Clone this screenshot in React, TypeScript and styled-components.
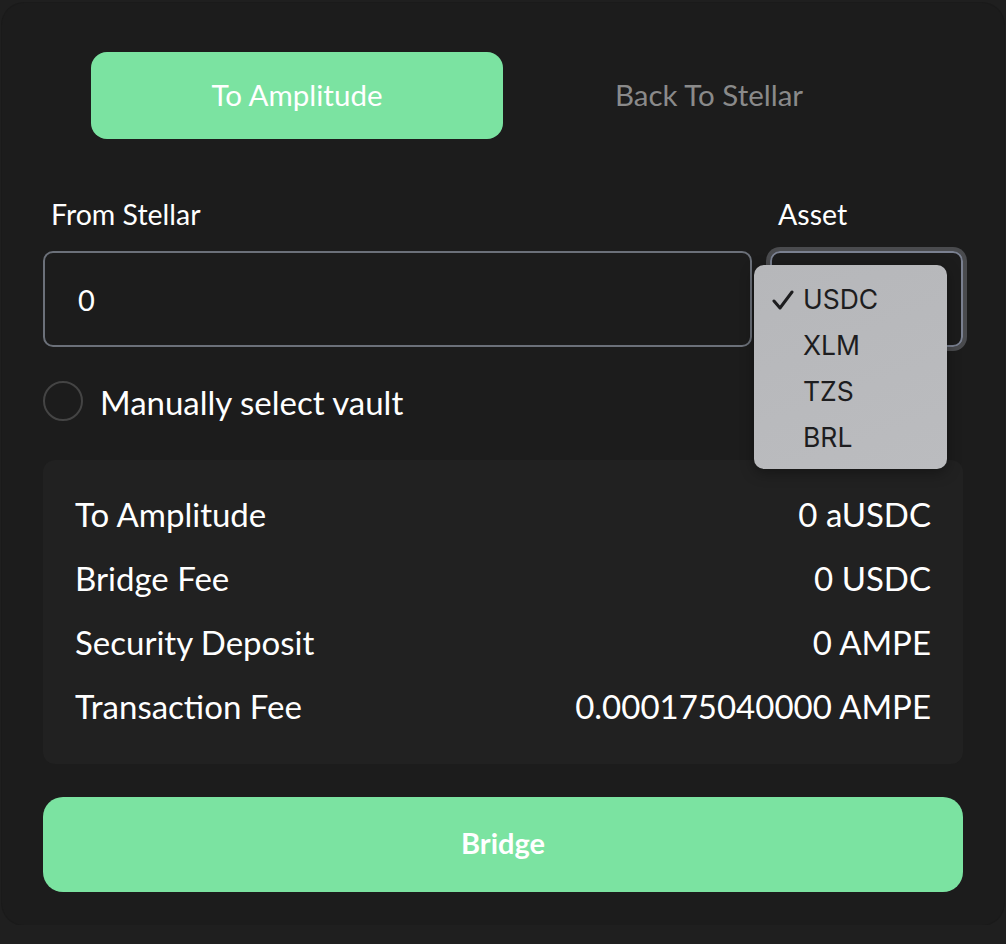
import React, { useState } from 'react';
import styled, { createGlobalStyle } from 'styled-components';

const GlobalStyle = createGlobalStyle`
    html, body {
        margin: 0;
        padding: 0;
        background: #1f1f1f;
    }
    * {
        box-sizing: border-box;
    }
`;

const green = '#7be3a1';
const font = `Lato, 'Open Sans', sans-serif`;

interface FeeRow {
    label: string;
    value: string;
}

const rows: FeeRow[] = [
    { label: 'To Amplitude', value: '0 aUSDC' },
    { label: 'Bridge Fee', value: '0 USDC' },
    { label: 'Security Deposit', value: '0 AMPE' },
    { label: 'Transaction Fee', value: '0.000175040000 AMPE' },
];

const assets = ['USDC', 'XLM', 'TZS', 'BRL'];

export default function App() {
    const [tab, setTab] = useState(0);
    const [asset, setAsset] = useState('USDC');

    return (
        <>
            <GlobalStyle />
            <Card>
                <Tabs>
                    <Tab active={tab === 0} onClick={() => setTab(0)}>
                        To Amplitude
                    </Tab>
                    <Tab active={tab === 1} onClick={() => setTab(1)}>
                        Back To Stellar
                    </Tab>
                </Tabs>

                <Fields>
                    <Label>From Stellar</Label>
                    <Label>Asset</Label>
                    <AmountInput defaultValue="0" />
                    <SelectWrap>
                        <SelectBox />
                        <Menu>
                            {assets.map((a) => (
                                <MenuItem key={a} onClick={() => setAsset(a)}>
                                    {a === asset && (
                                        <Check width="22" height="20" viewBox="0 0 22 20">
                                            <polyline points="2,11 8,18 20,2" />
                                        </Check>
                                    )}
                                    {a}
                                </MenuItem>
                            ))}
                        </Menu>
                    </SelectWrap>
                </Fields>

                <ToggleRow>
                    <Circle />
                    <ToggleLabel>Manually select vault</ToggleLabel>
                </ToggleRow>

                <InfoBox>
                    {rows.map((r) => (
                        <InfoRow key={r.label}>
                            <span>{r.label}</span>
                            <span>{r.value}</span>
                        </InfoRow>
                    ))}
                </InfoBox>

                <BridgeButton>Bridge</BridgeButton>
            </Card>
        </>
    );
}

const Card = styled.div`
    margin: 3px 2px 0 2px;
    width: 1002px;
    height: 922px;
    background: #1c1c1c;
    border-radius: 22px;
    box-shadow: 0 0 0 1px #1a1a1a;
    padding: 49px 41px 34px 41px;
    font-family: ${font};
    color: #ffffff;
    display: flex;
    flex-direction: column;
`;

const Tabs = styled.div`
    display: grid;
    grid-template-columns: 1fr 1fr;
    padding: 0 48px;
`;

const Tab = styled.button<{ active: boolean }>`
    height: 87px;
    border: none;
    border-radius: 16px;
    background: ${(p) => (p.active ? green : 'transparent')};
    color: ${(p) => (p.active ? '#ffffff' : '#8a8a8a')};
    font-family: ${font};
    font-size: 29.5px;
    padding: 0 0 2px 0;
    cursor: pointer;
`;

const Fields = styled.div`
    margin-top: 60px;
    display: grid;
    grid-template-columns: 709px 1fr;
    column-gap: 18px;
    row-gap: 22px;
    align-items: center;
`;

const Label = styled.div`
    padding-left: 8px;
    font-size: 28.5px;
    line-height: 30px;
`;

const AmountInput = styled.input`
    height: 96px;
    width: 100%;
    background: transparent;
    border: 2px solid #6b7079;
    border-radius: 10px;
    padding: 0 33px;
    color: #ffffff;
    font-family: ${font};
    font-size: 29px;
    outline: none;
`;

const SelectWrap = styled.div`
    position: relative;
    height: 96px;
`;

const SelectBox = styled.div`
    height: 96px;
    border: 2px solid #7a8090;
    border-radius: 10px;
    box-shadow: 0 0 0 4px #4a4b4e;
`;

const Menu = styled.div`
    position: absolute;
    left: -16px;
    top: 14px;
    width: 193px;
    padding: 11px 0 9px 0;
    border-radius: 10px;
    background: linear-gradient(160deg, #b6b7ba, #bbbcbf);
    box-shadow: 0 4px 14px rgba(0, 0, 0, 0.35);
    font-family: Inter, 'Liberation Sans', sans-serif;
    color: #1d1d1f;
`;

const MenuItem = styled.div`
    position: relative;
    height: 46px;
    line-height: 46px;
    padding-left: 49px;
    font-size: 26.5px;
    cursor: default;
`;

const Check = styled.svg`
    position: absolute;
    left: 18px;
    top: 14px;
    fill: none;
    stroke: #1d1d1f;
    stroke-width: 3;
    stroke-linecap: round;
    stroke-linejoin: round;
`;

const ToggleRow = styled.div`
    margin-top: 34px;
    height: 40px;
    display: flex;
    align-items: center;
    gap: 17px;
`;

const Circle = styled.div`
    width: 40px;
    height: 40px;
    flex: none;
    border-radius: 50%;
    border: 2px solid #444444;
`;

const ToggleLabel = styled.span`
    font-size: 33px;
    padding-top: 2px;
`;

const InfoBox = styled.div`
    margin-top: 39px;
    background: #212121;
    border-radius: 12px;
    padding: 22px 32px 26px 32px;
`;

const InfoRow = styled.div`
    display: flex;
    justify-content: space-between;
    align-items: center;
    height: 64px;
    font-size: 33px;
`;

const BridgeButton = styled.button`
    flex: none;
    margin-top: 33px;
    height: 95px;
    border: none;
    border-radius: 20px;
    background: ${green};
    color: #ffffff;
    font-family: ${font};
    font-size: 29px;
    font-weight: 700;
    padding: 0 0 5px 0;
    cursor: pointer;
`;
